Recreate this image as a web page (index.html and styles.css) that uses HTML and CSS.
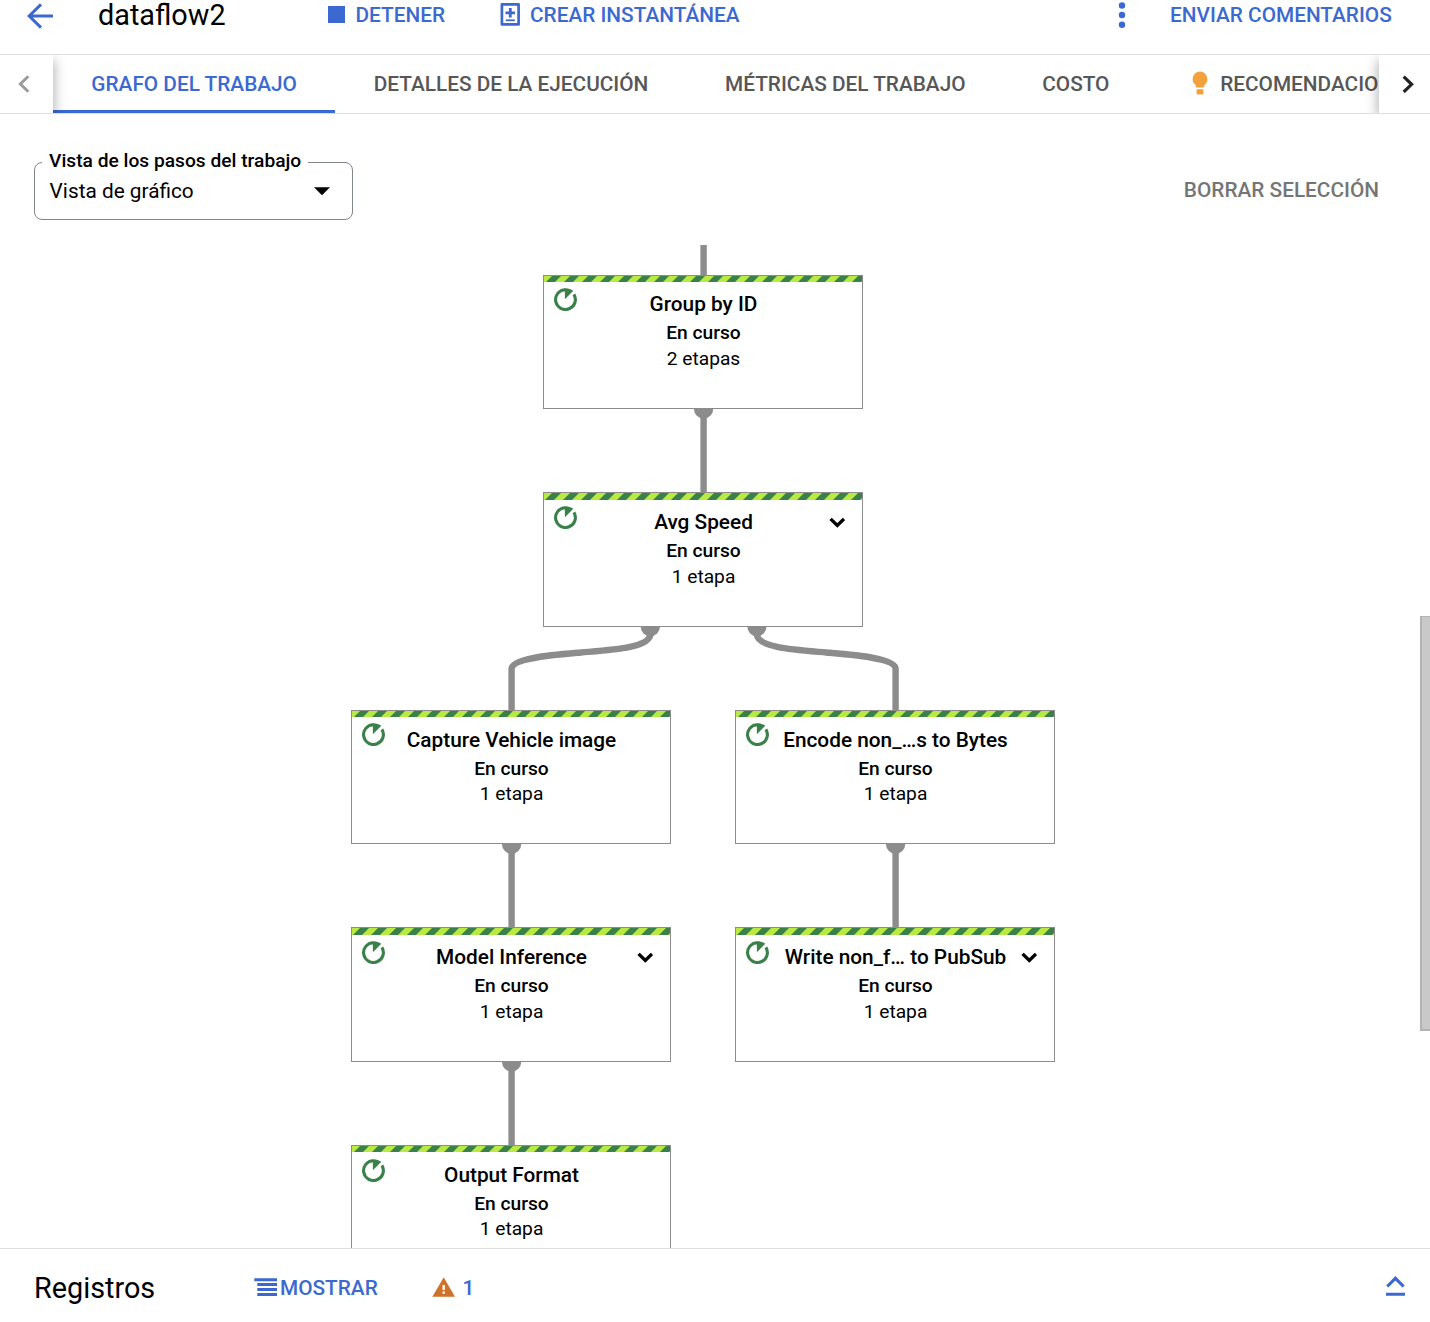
FILE: index.html
```html
<!DOCTYPE html>
<html lang="es">
<head>
<meta charset="utf-8">
<title>dataflow2</title>
<link rel="stylesheet" href="styles.css">
</head>
<body>
<svg width="0" height="0" class="defs" aria-hidden="true">
  <pattern id="stripe" width="18" height="7" patternUnits="userSpaceOnUse">
    <path d="M0 0H18V7H0Z" fill="#bbe944"/>
    <path d="M8 0H17L10 7H1Z" fill="#3a8149"/>
  </pattern>
  <symbol id="running" viewBox="-0.3 -0.5 24 24">
    <path d="M12 2.2A9.900 9.900 0 1 0 20.600 6.900" fill="none" stroke="#3a8149" stroke-width="3.100"/>
    <path d="M11.500 .7C14.500 .5 17.500 1.400 20 3.300L11.600 11.700Z" fill="#3a8149"/>
  </symbol>
  <symbol id="expand" viewBox="-0.3 0 16 11">
    <path d="M1.300 1.900 8 8.400 14.700 1.900" fill="none" stroke="#000" stroke-width="3.400"/>
  </symbol>
</svg>
<div class="app">
  <header class="header">
    <svg class="back" width="26" height="26" viewBox="0 0 26 26"><path d="M26 13H2.500M14 1.400 2.200 13 14 24.600" fill="none" stroke="#3b69d1" stroke-width="3"/></svg>
    <h1 class="title">dataflow2</h1>
    <button class="action stop"><span class="stop-icon"></span><span>DETENER</span></button>
    <button class="action snap">
      <svg width="20" height="23" viewBox="0 0 20 23"><path d="M1.900 1.400H18.600V21.400H1.900Z" fill="none" stroke="#3b69d1" stroke-width="2.700" stroke-linejoin="round"/><path d="M10.300 5V14.500M5.500 9.800H15" stroke="#3b69d1" stroke-width="2.800"/><path d="M5.800 17.300H14.800" stroke="#3b69d1" stroke-width="1.800"/></svg>
      <span>CREAR INSTANTÁNEA</span></button>
    <svg class="more" width="8" height="26" viewBox="0 0 8 26" fill="#3b69d1"><circle cx="4" cy="3.500" r="3.200"/><circle cx="4" cy="13" r="3.200"/><circle cx="4" cy="22.700" r="3.200"/></svg>
    <button class="action feedback">ENVIAR COMENTARIOS</button>
  </header>
  <nav class="tabs">
    <button class="scroller left"><svg width="12" height="18" viewBox="0 0 12 18"><path d="M10.300 1.300 2.400 9l7.900 7.700" fill="none" stroke="#9b9b9b" stroke-width="3"/></svg></button>
    <div class="tab-list">
      <a class="tab active"><span>GRAFO DEL TRABAJO</span></a>
      <a class="tab"><span>DETALLES DE LA EJECUCIÓN</span></a>
      <a class="tab"><span>MÉTRICAS DEL TRABAJO</span></a>
      <a class="tab"><span>COSTO</span></a>
      <a class="tab tip"><svg width="16" height="24" viewBox="0 0 16 24" fill="#f3a13d"><path d="M8 .6A7.400 7.400 0 0 0 .6 8C.6 11 2 12.700 3.800 14.300V15.500Q3.800 16.500 4.800 16.500H11.200Q12.200 16.500 12.200 15.500V14.300C14 12.700 15.400 11 15.400 8A7.400 7.400 0 0 0 8 .6ZM4.600 18.200H11.400V22.500Q11.400 23.400 10.500 23.400H5.500Q4.600 23.400 4.600 22.500Z"/></svg><span>RECOMENDACIONES</span></a>
    </div>
    <button class="scroller right"><svg width="12" height="18" viewBox="0 0 12 18"><path d="M1.700 1.600 9.600 9.300l-7.900 7.700" fill="none" stroke="#222" stroke-width="3.200"/></svg></button>
  </nav>
  <main class="content">
    <div class="toolbar">
      <fieldset class="select">
        <legend><span>Vista de los pasos del trabajo</span></legend>
        <div class="value"><span>Vista de gráfico</span><svg width="16" height="9" viewBox="0 0 16 9"><path d="M0 .2H16L8 8.200Z"/></svg></div>
      </fieldset>
      <button class="clear">BORRAR SELECCIÓN</button>
    </div>
    <div class="canvas">
      <svg class="edges" width="1430" height="1003" viewBox="0 245 1430 1003">
        <g fill="none" stroke="#8c8c8c" stroke-width="6.400">
          <path d="M703.600 245V276M703.600 415V493"/>
          <path d="M650.300 634C650.300 648 610 650 581 652.500S511.600 658 511.600 669V711"/>
          <path d="M756.900 634C756.900 648 797.200 650 826.200 652.500S895.600 658 895.600 669V711"/>
          <path d="M511.600 850V928M895.600 850V928M511.600 1068V1146"/>
        </g>
        <g fill="#8c8c8c">
          <circle cx="703.600" cy="409" r="9.600"/><circle cx="650.300" cy="626.800" r="9.600"/><circle cx="756.900" cy="626.800" r="9.600"/>
          <circle cx="511.600" cy="844.300" r="9.600"/><circle cx="895.600" cy="844.300" r="9.600"/><circle cx="511.600" cy="1062" r="9.600"/>
        </g>
      </svg>
      <article class="node n-group"><svg class="bar"><rect width="318" height="7" fill="url(#stripe)"/></svg><svg class="status"><use href="#running"/></svg><h2>Group by ID</h2><b>En curso</b><p>2 etapas</p></article>
      <article class="node odd n-avg"><svg class="bar"><rect width="318" height="7" fill="url(#stripe)"/></svg><svg class="status"><use href="#running"/></svg><h2>Avg Speed</h2><svg class="chev"><use href="#expand"/></svg><b>En curso</b><p>1 etapa</p></article>
      <article class="node low n-capture"><svg class="bar"><rect width="318" height="7" fill="url(#stripe)"/></svg><svg class="status"><use href="#running"/></svg><h2>Capture Vehicle image</h2><b>En curso</b><p>1 etapa</p></article>
      <article class="node low n-encode"><svg class="bar"><rect width="318" height="7" fill="url(#stripe)"/></svg><svg class="status"><use href="#running"/></svg><h2>Encode non_…s to Bytes</h2><b>En curso</b><p>1 etapa</p></article>
      <article class="node odd n-model"><svg class="bar"><rect width="318" height="7" fill="url(#stripe)"/></svg><svg class="status"><use href="#running"/></svg><h2>Model Inference</h2><svg class="chev"><use href="#expand"/></svg><b>En curso</b><p>1 etapa</p></article>
      <article class="node odd n-write"><svg class="bar"><rect width="318" height="7" fill="url(#stripe)"/></svg><svg class="status"><use href="#running"/></svg><h2>Write non_f… to PubSub</h2><svg class="chev"><use href="#expand"/></svg><b>En curso</b><p>1 etapa</p></article>
      <article class="node low n-output"><svg class="bar"><rect width="318" height="7" fill="url(#stripe)"/></svg><svg class="status"><use href="#running"/></svg><h2>Output Format</h2><b>En curso</b><p>1 etapa</p></article>
    </div>
    <div class="scrollbar"></div>
  </main>
  <footer class="logs">
    <h2 class="logs-title">Registros</h2>
    <button class="action show"><svg width="24" height="20" viewBox="0 0 24 20"><path d="M.3 .3H23V3.300H.3ZM3.300 5H23V8H3.300ZM3.300 10H23V13H3.300ZM3.300 15H23V18H3.300Z" fill="#3b69d1"/></svg><span>MOSTRAR</span></button>
    <button class="action warn"><svg width="23" height="20" viewBox="0 0 23 20"><path d="M11.700 .3 23 19.700H.4Z" fill="#cf722c"/><path d="M11.700 8V13M11.700 14.500V16.800" stroke="#fff" stroke-width="2.300"/></svg><span>1</span></button>
    <svg class="raise" width="20" height="21" viewBox="0 0 20 21"><path d="M1.200 10.500 9.400 2.300 17.600 10.500M0 18.200H19" fill="none" stroke="#3b69d1" stroke-width="3.100"/></svg>
  </footer>
</div>
</body>
</html>
```
FILE: styles.css
```css
* { box-sizing: border-box; }
body { margin: 0; background: #fff; color: #000; font-family: Roboto, sans-serif; }
h1, h2, p { margin: 0; font-weight: 400; }
button { border: 0; padding: 0; background: none; font: inherit; color: inherit; }
.defs { position: absolute; }
.app { width: 1430px; height: 1322px; display: flex; flex-direction: column; overflow: hidden; }

.header { height: 55px; flex: none; border-bottom: 1px solid #dedede; display: flex; align-items: flex-start; }
.action { display: flex; align-items: center; height: 30px; font-size: 20.8px; font-weight: 500; color: #3b69d1; white-space: nowrap; }
.back { margin: 3px 0 0 27px; }
.title { width: 230px; margin-left: 45px; font-size: 28.8px; line-height: 30px; }
.stop { gap: 10.5px; width: 172px; }
.stop-icon { width: 17px; height: 17px; margin-top: -1px; background: #3b69d1; }
.snap { gap: 10px; }
.snap svg { margin-top: -1px; }
.more { margin: 2px 44px 0 auto; }
.feedback { width: 260px; }

.tabs { height: 59px; flex: none; border-bottom: 1px solid #dedede; display: flex; }
.scroller { flex: none; display: flex; align-items: center; background: #fff; z-index: 1; }
.left { width: 53px; padding-left: 18px; box-shadow: 2px 5px 11px rgba(0,0,0,.28); clip-path: inset(0 -20px 0 0); }
.right { width: 51px; padding-left: 23px; box-shadow: -2px 5px 11px rgba(0,0,0,.28); clip-path: inset(0 0 0 -20px); }
.tab-list { flex: 1; min-width: 0; overflow: hidden; display: flex; }
.tab { flex: none; display: flex; align-items: center; padding: 0 38.35px; font-size: 20.8px; font-weight: 500; color: #575757; }
.active { color: #3b69d1; position: relative; }
.active::after { content: ""; position: absolute; left: 0; right: 0; bottom: 0; height: 3px; background: #3b69d1; }
.tip svg { margin: -3px 12px 0 6px; }

.content { flex: 1; min-height: 0; position: relative; display: flex; flex-direction: column; }
.toolbar { height: 131px; flex: none; display: flex; justify-content: space-between; padding: 35px 51px 0 34px; }
.select { margin: 0; padding: 0 22px 0 14.600px; width: 319px; height: 71px; border: 1px solid #80868b; border-radius: 8px; }
.select legend { margin-left: -7.600px; padding: 0 7px; font-size: 19.2px; line-height: 26px; font-weight: 500; white-space: nowrap; }
.select legend span { display: block; margin: -1px 0 1px; }
.value { display: flex; justify-content: space-between; align-items: center; font-size: 20.8px; line-height: 30px; margin-top: 1px; }
.clear { height: 30px; margin-top: 26px; font-size: 20.8px; font-weight: 500; color: #757575; }

.canvas { flex: 1; min-height: 0; position: relative; overflow: hidden; }
.edges { position: absolute; left: 0; top: 0; }
.node { position: absolute; width: 320px; height: 134px; border: 1px solid #8c8c8c; background: #fff; text-align: center; padding: 14px 0 0 1px; font-size: 19.2px; line-height: 26px; }
.bar { position: absolute; left: 0; top: 0; width: 318px; height: 6px; }
.odd { height: 135px; padding-top: 15px; }
.odd .bar { height: 7px; }
.low { padding-top: 15px; }
.node h2 { font-size: 20.8px; line-height: 28px; font-weight: 500; white-space: nowrap; }
.node b { display: block; font-weight: 500; line-height: 29px; }
.node p { line-height: 23px; }
.low p { margin-top: -1px; }
.status { position: absolute; left: 9px; top: 11px; width: 24px; height: 24px; }
.odd .status, .n-output .status { top: 12px; }
.chev { position: absolute; left: 285px; top: 24px; width: 16px; height: 11px; }
.n-group { left: 543px; top: 30px; }
.n-avg { left: 543px; top: 247px; }
.n-capture { left: 351px; top: 465px; }
.n-encode { left: 735px; top: 465px; }
.n-model { left: 351px; top: 682px; }
.n-write { left: 735px; top: 682px; }
.n-output { left: 351px; top: 900px; }
.scrollbar { position: absolute; right: 0; top: 502px; width: 10px; height: 415px; background: #c9c9c9; border: solid #b3b3b3; border-width: 1px 0 2px 2px; }

.logs { height: 74px; flex: none; border-top: 1px solid #dedede; display: flex; align-items: center; padding: 4px 24px 0 34px; }
.logs-title { width: 220px; font-size: 28.8px; }
.show { width: 178px; gap: 2px; }
.warn { gap: 7.5px; }
.warn svg { margin-top: -2px; }
.raise { margin: -2px 0 0 auto; }
```
